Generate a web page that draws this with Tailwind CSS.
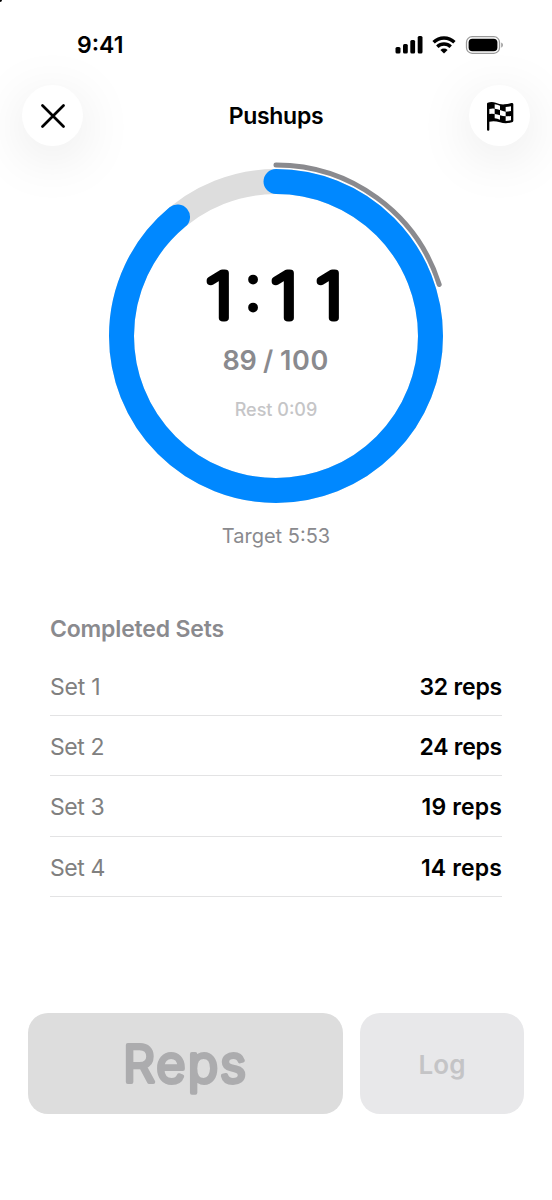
<!DOCTYPE html>
<html lang="en">
<head>
<meta charset="utf-8">
<title>Pushups</title>
<script src="https://cdn.jsdelivr.net/npm/@tailwindcss/browser@4"></script>
</head>
<body class="bg-white">
<div class="relative h-[1200px] w-[552px] overflow-hidden bg-white font-['Inter','Liberation_Sans',sans-serif] text-black">
  <div class="absolute top-0 left-0 size-[2px] rounded-br-full bg-black"></div>

  <div class="flex h-[85px] items-center justify-between pt-[5px] pr-[49px] pl-[77px]">
    <span class="text-[23px] leading-[28px] font-semibold">9:41</span>
    <svg class="h-[20px] w-[108px]" viewBox="395 35 108 20">
      <g fill="#000">
        <rect x="395.5" y="47" width="5" height="6.5" rx="1.5"/>
        <rect x="403" y="44" width="4.8" height="9.5" rx="1.5"/>
        <rect x="410.3" y="40" width="4.8" height="13.5" rx="1.5"/>
        <rect x="417.7" y="36" width="4.8" height="17.5" rx="1.5"/>
      </g>
      <g fill="none" stroke="#000" stroke-width="3.400">
        <path d="M433.600 42.300a14.800 14.800 0 0 1 20.800 0"/>
        <path d="M437.300 46.700a9.500 9.500 0 0 1 13.400 0"/>
      </g>
      <path d="M440.400 49.900a5.200 5.200 0 0 1 7.200 0L444 53.500z" fill="#000"/>
      <rect x="466.500" y="36.700" width="33" height="16.600" rx="5.600" fill="none" stroke="#000" stroke-opacity=".4" stroke-width="1.300"/>
      <rect x="468.600" y="38.800" width="28.800" height="12.400" rx="3.800" fill="#000"/>
      <path d="M501.300 42.400c2 .8 2 4.400 0 5.200z" fill="#000" fill-opacity=".45"/>
    </svg>
  </div>

  <header class="flex h-[61px] items-center justify-between px-[22px]">
    <div class="flex size-[61px] items-center justify-center rounded-full bg-white shadow-[0_11px_56px_rgba(0,0,0,0.10)]">
      <svg class="size-[24px]" viewBox="0 0 24 24" fill="none" stroke="#000" stroke-width="2.700" stroke-linecap="round"><path d="M1.500 1.500L22.500 22.500M22.500 1.500L1.500 22.500"/></svg>
    </div>
    <h1 class="text-[23px] leading-[28px] font-semibold tracking-[-0.3px]">Pushups</h1>
    <div class="flex size-[61px] items-center justify-center rounded-full bg-white shadow-[0_11px_56px_rgba(0,0,0,0.10)]">
      <svg class="ml-[2px] h-[30px] w-[28px]" viewBox="139 91 84 90">
        <path d="M142 99Q142 97 144 96Q156 92 168 96Q181 102 194 101Q206 100 215 97Q221 96 221 101L221 150Q221 154 217 155Q198 161 181 155Q164 149 149 153L149 177Q149 180 145.500 180Q142 180 142 177Z" fill="#000"/>
        <g fill="#fff">
          <path d="M165 101Q173 102 181 105L181 118Q173 115 165 114Z"/>
          <path d="M198 109Q206 109 214 107L214 121Q206 123 198 123Z"/>
          <path d="M149 115Q157 113 165 114L165 130Q157 129 149 130Z"/>
          <path d="M181 118Q190 122 198 123L198 137Q190 137 181 134Z"/>
          <path d="M165 130Q173 131 181 134L181 147Q173 144 165 143Z"/>
          <path d="M198 137Q206 137 214 136L214 149Q206 151 198 151Z"/>
        </g>
      </svg>
    </div>
  </header>

  <div class="flex justify-center pt-[14px]">
    <svg class="h-[344px] w-[352px]" viewBox="100 160 352 344">
      <circle cx="276" cy="336" r="154.500" fill="none" stroke="#ddd" stroke-width="25"/>
      <circle cx="276" cy="336" r="154.500" fill="none" stroke="#0088ff" stroke-width="25" stroke-linecap="round" pathLength="100" stroke-dasharray="89 100" transform="rotate(-90 276 336)"/>
      <path d="M276 165A171 171 0 0 1 439.200 284.500" fill="none" stroke="#8a8a8e" stroke-width="5" stroke-linecap="round"/>
      <g font-family="Inter" font-size="62" stroke="#000" stroke-linejoin="round">
        <text transform="scale(1.220 1)" x="168.500" y="317.800" font-weight="100" stroke-width="6.900">1</text>
        <text x="244.500" y="309.500" font-weight="200" stroke-width="5">:</text>
        <text transform="scale(1.220 1)" x="221.800 258.700" y="317.800" font-weight="100" stroke-width="6.900">11</text>
      </g>
      <g font-family="Inter" font-size="27" font-weight="600" fill="#8a8a8e">
        <text y="369.500"><tspan x="222.500" letter-spacing="-0.300">89</tspan> <tspan x="263">/</tspan> <tspan x="280" letter-spacing="0.600">100</tspan></text>
      </g>
      <text x="276" y="415.500" text-anchor="middle" font-family="Inter" font-size="18" font-weight="500" fill="#c5c5c7">Rest 0:09</text>
    </svg>
  </div>
  <p class="mt-[18px] text-center text-[20px] leading-[28px] text-[#8a8a8e]">Target 5:53</p>

  <section class="mx-[50px] mt-[65px]">
    <h2 class="text-[23px] leading-[28px] font-semibold tracking-[-0.18px] text-[#8a8a8e]">Completed Sets</h2>
    <div class="mt-[12.500px] text-[23px] leading-[28px]">
      <div class="flex h-[60.400px] items-center justify-between border-b border-[#e3e3e4] pt-[3px]"><span class="tracking-[-0.25px] text-[#808080]">Set 1</span><span class="font-semibold tracking-[-0.2px]">32 reps</span></div>
      <div class="flex h-[60.400px] items-center justify-between border-b border-[#e3e3e4] pt-[3px]"><span class="tracking-[-0.4px] text-[#808080]">Set 2</span><span class="font-semibold tracking-[-0.25px]">24 reps</span></div>
      <div class="flex h-[60.400px] items-center justify-between border-b border-[#e3e3e4] pt-[3px]"><span class="tracking-[-0.4px] text-[#808080]">Set 3</span><span class="font-semibold tracking-[0.15px]">19 reps</span></div>
      <div class="flex h-[60.400px] items-center justify-between border-b border-[#e3e3e4] pt-[3px]"><span class="tracking-[-0.4px] text-[#808080]">Set 4</span><span class="font-semibold tracking-[0.15px]">14 reps</span></div>
    </div>
  </section>

  <div class="mt-[115.500px] flex h-[101px] gap-[17px] px-[28px]">
    <div class="w-[315px] rounded-[20px] bg-[#ddd]">
      <svg class="h-[101px] w-[315px]" viewBox="28 1013 315 101"><text x="123" y="1082" font-family="Inter" font-size="50.500" font-weight="300" letter-spacing="2" fill="#acacae" stroke="#acacae" stroke-width="4" stroke-linejoin="round">Reps</text></svg>
    </div>
    <div class="flex w-[164px] items-center justify-center rounded-[20px] bg-[#e8e8ea] pt-[2px] text-[26px] font-semibold text-[#c4c4c6]">Log</div>
  </div>
</div>
</body>
</html>
